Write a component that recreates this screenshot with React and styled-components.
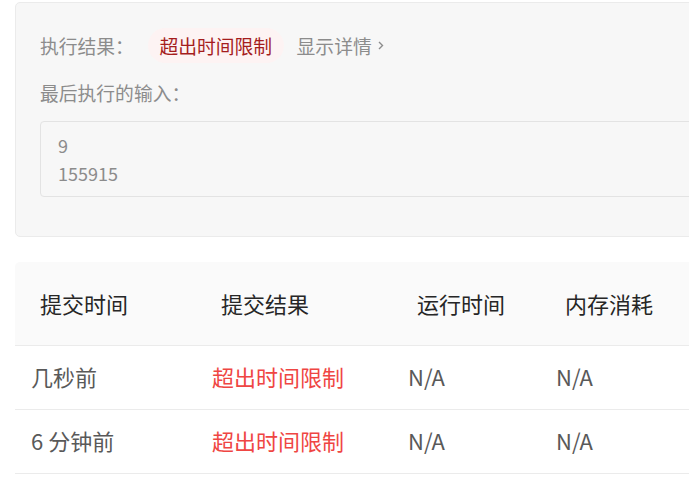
import React from "react";
import styled, { createGlobalStyle } from "styled-components";

const Global = createGlobalStyle`
  html, body { margin: 0; padding: 0; background: #fff; overflow: hidden; }
  body { font-family: "Noto Sans CJK SC", "Noto Sans", sans-serif; }
`;

const Page = styled.div`
  width: 780px;
  padding: 2px 0 0 15px;
`;

const Card = styled.section`
  background: #f7f7f7;
  border: 1px solid #ebebeb;
  border-radius: 5px;
  padding: 25px 24px 39px 24px;
`;

const ResultRow = styled.div`
  display: flex;
  align-items: center;
  height: 35px;
`;

const Label = styled.span`
  font-size: 18.8px;
  line-height: 28px;
  color: #8c8c8c;
  display: block;
`;

const Badge = styled.span`
  display: inline-flex;
  align-items: center;
  height: 35px;
  padding: 0 11.5px;
  margin-left: 14px;
  border-radius: 18px;
  background: #fdf3f3;
  color: #a51d1d;
  font-size: 18.8px;
`;

const Detail = styled.span`
  display: inline-flex;
  align-items: center;
  gap: 6px;
  margin-left: 13px;
  font-size: 18.8px;
  color: #8c8c8c;
`;

const InputLabel = styled(Label)`
  margin-top: 16px;
`;

const CodeBox = styled.pre`
  margin: 14px 0 0 0;
  background: #f7f7f7;
  border: 1px solid #e3e3e3;
  border-radius: 4px;
  padding: 9px 17px 9px;
  font-family: "Noto Sans CJK SC", "Noto Sans", sans-serif;
  font-size: 18px;
  line-height: 28px;
  color: #8c8c8c;
`;

const Table = styled.div`
  margin-top: 25px;
  display: grid;
  grid-template-columns: 181px 196px 148px 1fr;
  font-size: 22px;
`;

const HeadCell = styled.div`
  background: #fafafa;
  height: 84px;
  box-sizing: border-box;
  padding: 0 0 2px 25px;
  display: flex;
  align-items: center;
  color: #262626;
  border-bottom: 1px solid #ebebeb;
  &:first-child { border-top-left-radius: 5px; }
`;

const Cell = styled.div`
  height: 64px;
  box-sizing: border-box;
  display: flex;
  align-items: center;
  padding: 0 0 4px 16px;
  color: ${(p) => (p.$error ? "#ef4643" : "#595959")};
  border-bottom: 1px solid #ebebeb;
`;

const Chevron = () => (
  <svg width="6" height="9" viewBox="0 0 6 9" fill="none">
    <path d="M1 1l3.5 3.5L1 8" stroke="#8c8c8c" strokeWidth="1.4" />
  </svg>
);

const rows = [
  { time: "几秒前", result: "超出时间限制", run: "N/A", mem: "N/A" },
  { time: "6 分钟前", result: "超出时间限制", run: "N/A", mem: "N/A" },
];

export default function App() {
  return (
    <>
      <Global />
      <Page>
        <Card>
          <ResultRow>
            <Label>执行结果：</Label>
            <Badge>超出时间限制</Badge>
            <Detail>
              显示详情
              <Chevron />
            </Detail>
          </ResultRow>
          <InputLabel>最后执行的输入：</InputLabel>
          <CodeBox>{"9\n155915"}</CodeBox>
        </Card>
        <Table>
          <HeadCell>提交时间</HeadCell>
          <HeadCell>提交结果</HeadCell>
          <HeadCell>运行时间</HeadCell>
          <HeadCell>内存消耗</HeadCell>
          {rows.map((r, i) => (
            <React.Fragment key={i}>
              <Cell>{r.time}</Cell>
              <Cell $error>{r.result}</Cell>
              <Cell>{r.run}</Cell>
              <Cell>{r.mem}</Cell>
            </React.Fragment>
          ))}
        </Table>
      </Page>
    </>
  );
}
